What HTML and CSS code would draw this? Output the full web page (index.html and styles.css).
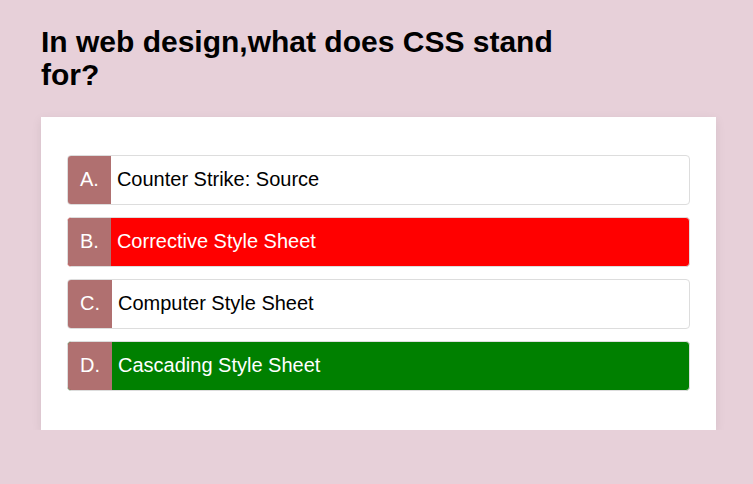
FILE: index.html
```html
<!DOCTYPE html>
<html>
<head>
<meta charset="utf-8">
<link rel="stylesheet" href="styles.css">
</head>
<body>
<div class="quiz">
  <h1 class="question">In web design,what does CSS stand for?</h1>
  <div class="card">
    <ul class="options">
      <li class="option"><span class="letter">A.</span><span class="answer">Counter Strike: Source</span></li>
      <li class="option wrong"><span class="letter">B.</span><span class="answer">Corrective Style Sheet</span></li>
      <li class="option"><span class="letter">C.</span><span class="answer">Computer Style Sheet</span></li>
      <li class="option right"><span class="letter">D.</span><span class="answer">Cascading Style Sheet</span></li>
    </ul>
  </div>
</div>
</body>
</html>
```
FILE: styles.css
```css
html, body {
  margin: 0;
  padding: 0;
  background: #e7d0d9;
  font-family: "Liberation Sans", Arial, sans-serif;
}
.quiz {
  padding: 25px 37px 0 41px;
}
.question {
  margin: 0 0 26px 0;
  max-width: 540px;
  font-size: 30px;
  line-height: 33px;
  font-weight: bold;
  color: #000;
}
.card {
  background: #fff;
  padding: 38px 26px 39px 26px;
  box-shadow: 0 3px 10px rgba(0, 0, 0, 0.08);
}
.options {
  list-style: none;
  margin: 0;
  padding: 0;
  display: flex;
  flex-direction: column;
  gap: 12.5px;
}
.option {
  display: flex;
  align-items: stretch;
  height: 49.5px;
  box-sizing: border-box;
  border: 1px solid #dddddd;
  border-radius: 4px;
  overflow: hidden;
  background: #fff;
  color: #000;
  font-size: 20px;
}
.letter {
  display: flex;
  align-items: center;
  padding: 0 12px;
  background: #b07070;
  color: #fff;
}
.answer {
  display: flex;
  align-items: center;
  padding-left: 6px;
}
.option.wrong {
  background: #ff0000;
  color: #fff;
}
.option.right {
  background: #008000;
  color: #fff;
}
```
